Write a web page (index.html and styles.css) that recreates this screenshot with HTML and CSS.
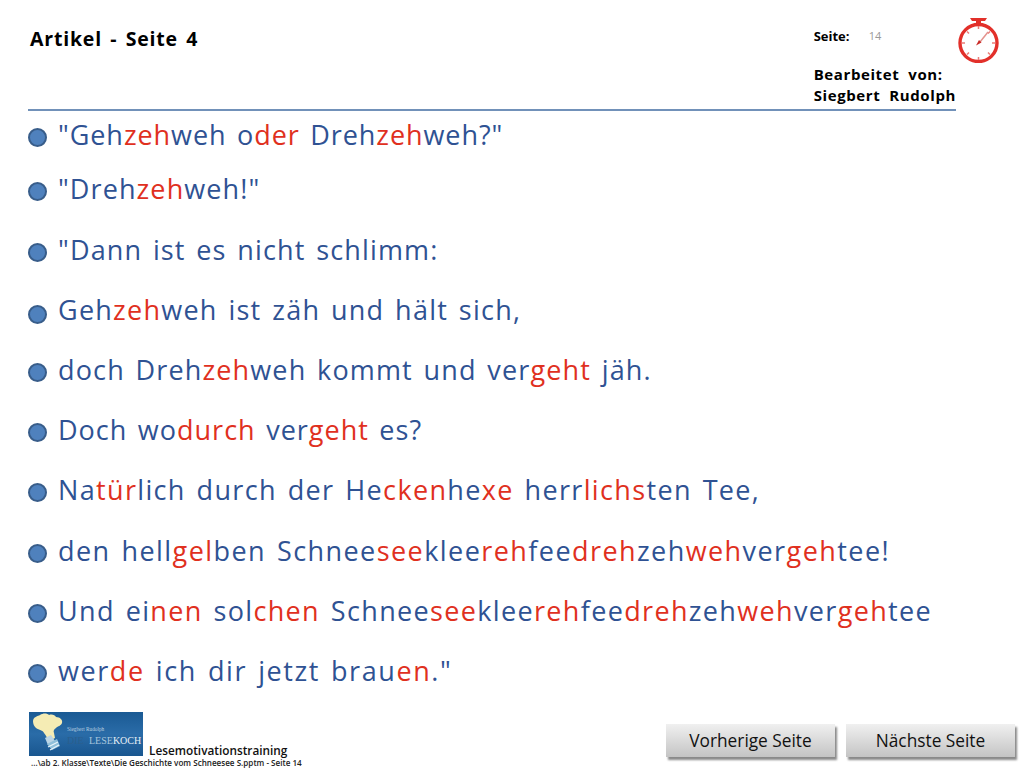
FILE: index.html
```html
<!DOCTYPE html>
<html lang="de">
<head>
<meta charset="utf-8">
<title>Artikel - Seite 4</title>
<link rel="stylesheet" href="styles.css">
</head>
<body>
<div class="slide">
  <header class="head">
    <h1 class="title">Artikel - Seite 4</h1>
    <div class="meta">
      <div class="page"><b>Seite:</b><span class="num">14</span></div>
      <div class="author">Bearbeitet&nbsp; von:<br>Siegbert&nbsp; Rudolph</div>
    </div>
    <svg class="timer" viewBox="0 0 44 46" width="44" height="46">
      <path d="M13 1h17l-2 3h-4v4h-5V4h-4z" fill="#e2302a"/>
      <circle cx="21.500" cy="26" r="18.500" fill="none" stroke="#e2302a" stroke-width="3.400"/>
      <path d="M21.500 9v3M21.500 40v3M5 26h3M35 26h3M10 14.500l2 2M33 14.500l-2 2M10 37.500l2-2M33 37.500l-2-2" stroke="#ea7d78" stroke-width="1.500"/>
      <path d="M23 25L31 15" stroke="#e4938e" stroke-width="1.500"/>
      <path d="M19 28.500l3-5.500 2.500 2.500z" fill="#c92a25"/>
    </svg>
  </header>
  <ul class="lines">
    <li class="line first"><i class="dot"></i><span>"Geh<em>zeh</em>weh o<em>der</em> Dreh<em>zeh</em>weh?"</span></li>
    <li class="line second"><i class="dot"></i><span>"Dreh<em>zeh</em>weh!"</span></li>
    <li class="line snug"><i class="dot"></i><span>"Dann ist es nicht schlimm:</span></li>
    <li class="line low"><i class="dot"></i><span>Geh<em>zeh</em>weh ist zäh und hält sich,</span></li>
    <li class="line snug"><i class="dot"></i><span>doch Dreh<em>zeh</em>weh kommt und ver<em>geht</em> jäh.</span></li>
    <li class="line tight"><i class="dot"></i><span>Doch wo<em>durch</em> ver<em>geht</em> es?</span></li>
    <li class="line wide"><i class="dot"></i><span>Na<em>tür</em>lich durch der He<em>cken</em>he<em>xe</em> herr<em>lichs</em>ten Tee,</span></li>
    <li class="line wider"><i class="dot"></i><span>den hell<em>gel</em>ben Schnee<em>see</em>klee<em>reh</em>fee<em>dreh</em>zeh<em>weh</em>ver<em>geh</em>tee!</span></li>
    <li class="line wide"><i class="dot"></i><span>Und ei<em>nen</em> sol<em>chen</em> Schnee<em>see</em>klee<em>reh</em>fee<em>dreh</em>zeh<em>weh</em>ver<em>geh</em>tee</span></li>
    <li class="line widest"><i class="dot"></i><span>wer<em>de</em> ich dir jetzt brau<em>en</em>."</span></li>
  </ul>
  <footer class="foot">
    <div class="brand">
      <div class="brandrow">
        <svg class="logo" viewBox="0 0 114 44" width="114" height="44">
          <defs>
            <linearGradient id="logobg" x1="0" y1="0" x2="0" y2="1">
              <stop offset="0" stop-color="#1a5a94"/>
              <stop offset="0.5" stop-color="#2a6ca8"/>
              <stop offset="1" stop-color="#19568f"/>
            </linearGradient>
          </defs>
          <rect width="114" height="44" fill="url(#logobg)"/>
          <path d="M4 9c0-4 5-5 7-6 3-2 7-2 9 0 3-1 6 0 7 2 4 0 7 3 6 6-1 3-4 3-6 5-2 1-3 3-2 5l1 5-6 3c-2-3-3-6-5-8-1-3-5-3-8-5-2-2-3-4-3-7z" fill="#f5ecb4"/>
          <path d="M16 26l6-3 4 6-7 4z" fill="#bcd6e6"/>
          <path d="M18 32l10-5 3 7-8 4z" fill="#8fc0da"/>
          <path d="M19 35l10-5M21 38l9-5" stroke="#e8f4fa" stroke-width="1.200"/>
          <text x="38" y="19" class="logo-small">Siegbert Rudolph</text>
          <text x="38" y="32" class="logo-big"><tspan fill="#2b5f8d">DIE</tspan><tspan x="60" fill="#a8c6dc">LESE</tspan><tspan fill="#e8f0f5">KOCH</tspan></text>
        </svg>
        <span class="training">Lesemotivationstraining</span>
      </div>
      <div class="path">...\ab 2. Klasse\Texte\Die Geschichte vom Schneesee S.pptm - Seite 14</div>
    </div>
    <nav class="nav">
      <a class="btn">Vorherige Seite</a>
      <a class="btn">Nächste Seite</a>
    </nav>
  </footer>
</div>
</body>
</html>
```
FILE: styles.css
```css
* { box-sizing: border-box; }
html, body { margin: 0; padding: 0; background: #fff; }
.slide {
  width: 1024px;
  height: 768px;
  overflow: hidden;
  display: flex;
  flex-direction: column;
  font-family: "Open Sans", sans-serif;
}
.head {
  height: 111px;
  margin: 0 0 0 28px;
  width: 928px;
  border-bottom: 2px solid #7191b9;
  display: flex;
  position: relative;
}
.title {
  margin: 27px 0 0 2px;
  font-size: 19.500px;
  line-height: 24px;
  font-weight: 700;
  letter-spacing: 0.800px;
  word-spacing: 2.500px;
  color: #000;
  width: 784px;
  white-space: nowrap;
}
.meta { color: #000; }
.page {
  margin-top: 27px;
  height: 18px;
  font-size: 13px;
  line-height: 18px;
  display: flex;
}
.page b { width: 55px; }
.num { color: #999; font-size: 11px; }
.author {
  margin-top: 19px;
  font-weight: 700;
  font-size: 15px;
  line-height: 21px;
  letter-spacing: 0.600px;
  white-space: nowrap;
}
.timer { position: absolute; left: 929px; top: 17px; }
.lines {
  list-style: none;
  margin: 0;
  padding: 0;
  flex: 1;
  font-size: 27px;
  letter-spacing: 1.250px;
  word-spacing: 2.500px;
  color: #2f5293;
}
.line {
  height: 60.200px;
  margin-left: 28px;
  display: flex;
  align-items: center;
  gap: 11px;
  white-space: nowrap;
}
.first { height: 46px; letter-spacing: 0.940px; }
.second { height: 62px; letter-spacing: 1.100px; }
.tight { letter-spacing: 1px; }
.snug { letter-spacing: 1.150px; }
.wide { letter-spacing: 1.340px; }
.wider { letter-spacing: 1.430px; }
.widest { letter-spacing: 1.580px; }
.line em { font-style: normal; color: #e0301e; }
.dot {
  flex: none;
  width: 19px;
  height: 19px;
  margin-top: 6px;
  border-radius: 50%;
  background: #4f81bd;
  border: 2px solid #385d8a;
}
.low .dot { margin-top: 10px; }
.foot {
  height: 56px;
  display: flex;
  justify-content: space-between;
  padding: 0 8px 0 29px;
}
.brandrow { display: flex; align-items: flex-end; height: 44px; }
.logo { display: block; }
.logo-small { font: 5.300px "Liberation Serif", serif; fill: #b9cfe0; }
.logo-big { font: 10px "Liberation Serif", serif; }
.training {
  margin-left: 6px;
  font-size: 11.800px;
  line-height: 14px;
  font-weight: 600;
  color: #111;
  margin-bottom: -1px;
}
.path {
  margin-left: 2px;
  margin-top: 1px;
  font-size: 8.100px;
  line-height: 12px;
  font-weight: 600;
  color: #222;
  white-space: nowrap;
}
.nav { display: flex; gap: 11px; margin-top: 12px; margin-right: 1px; }
.btn {
  width: 169px;
  height: 33px;
  background: linear-gradient(#f0f0f0, #c4c4c4);
  box-shadow: 2px 3px 2px #8a8a8a;
  font-size: 17.300px;
  line-height: 33px;
  text-align: center;
  color: #111;
}
```
